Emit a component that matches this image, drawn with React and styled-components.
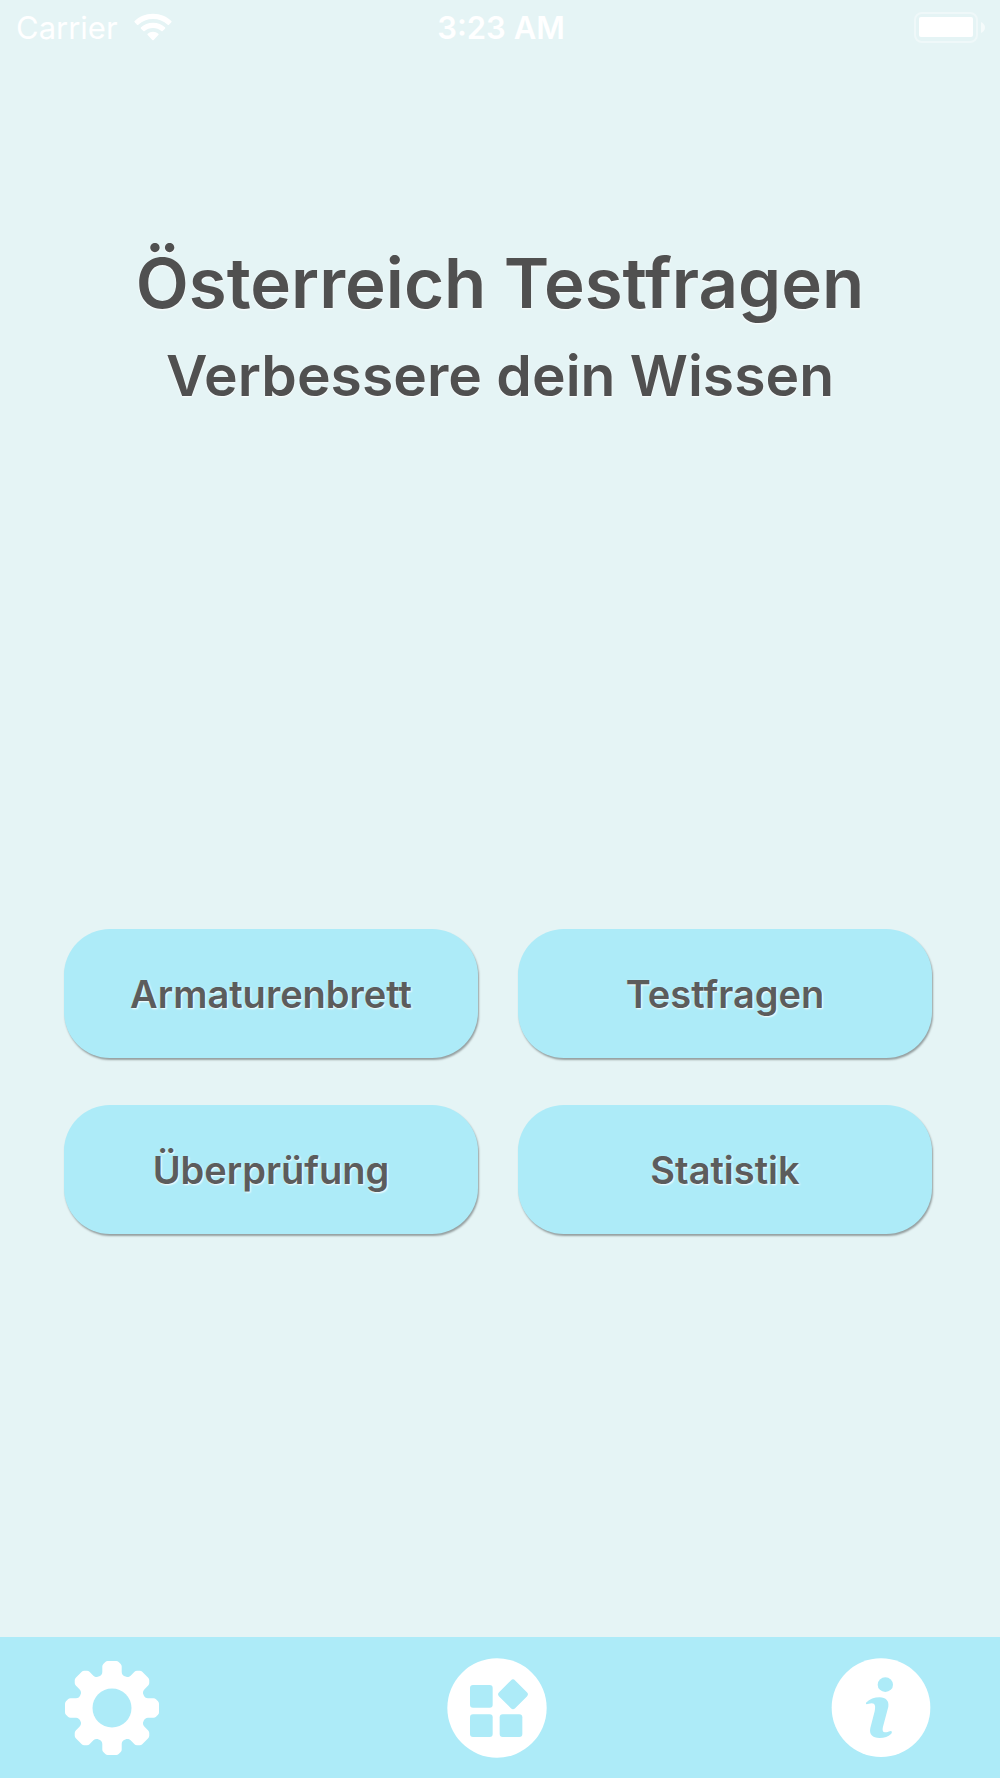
import React from "react";
import styled, { createGlobalStyle } from "styled-components";

const teeth = [0, 45, 90, 135, 180, 225, 270, 315];

const WifiIcon = () => (
  <svg width="38" height="28" viewBox="0 0 114 84" fill="#fff" aria-hidden="true">
    <path d="M57 2C80 2 99 11 112 24Q114 26 112 28L105 35Q103 37 101 35C89 24 74 18 57 18S25 24 13 35Q11 37 9 35L2 28Q0 26 2 24C15 11 34 2 57 2Z" />
    <path d="M57 29C72 29 84 34 93 43Q95 45 93 47L86 54Q84 56 82 54C75 48 67 45 57 45S39 48 32 54Q30 56 28 54L21 47Q19 45 21 43C30 34 42 29 57 29Z" />
    <path d="M57 56C63 56 69 58 73 62Q75 64 73 66L59 81Q57 83 55 81L41 66Q39 64 41 62C45 58 51 56 57 56Z" />
  </svg>
);

const BatteryIcon = () => (
  <svg width="72" height="32" viewBox="0 0 72 32" aria-hidden="true">
    <rect x="1" y="2" width="62" height="29" rx="7" fill="none" stroke="#fff" strokeOpacity="0.4" strokeWidth="2" />
    <rect x="5" y="6" width="54" height="20" rx="2" fill="#fff" />
    <path d="M67 11Q71 13 71 16.500T67 22Z" fill="#fff" fillOpacity="0.6" />
  </svg>
);

const GearIcon = () => (
  <svg width="100" height="100" viewBox="-50 -50 100 100" aria-hidden="true">
    <g fill="#fff">
      {teeth.map(angle => (
        <path
          key={angle}
          transform={`rotate(${angle})`}
          d="M0 0L-13.500 -31.200L-13 -31.500C-11 -32.300 -9.700 -34 -9.700 -36V-41.500Q-9.700 -43 -8.700 -44L-6.700 -46Q-5.700 -47 -4.200 -47H4.200Q5.700 -47 6.700 -46L8.700 -44Q9.700 -43 9.700 -41.500V-36C9.700 -34 11 -32.300 13 -31.500L13.500 -31.200Z"
        />
      ))}
      <circle r="33" />
    </g>
    <circle r="19.500" fill="#adebf8" />
  </svg>
);

const GridIcon = () => (
  <svg width="100" height="100" viewBox="52 54 300 300" aria-hidden="true">
    <circle cx="202" cy="204" r="149" fill="#fff" />
    <g fill="#adebf8">
      <rect x="121" y="135" width="68" height="68" rx="9" />
      <rect x="121" y="223" width="68" height="68" rx="9" />
      <rect x="210" y="223" width="68" height="68" rx="9" />
      <rect x="216" y="129" width="68" height="68" rx="9" transform="rotate(45 250 163)" />
    </g>
  </svg>
);

const InfoIcon = () => (
  <svg width="100" height="100" viewBox="34 54 300 300" aria-hidden="true">
    <circle cx="184" cy="203" r="148" fill="#fff" />
    <g fill="#adebf8">
      <ellipse cx="197" cy="134" rx="23" ry="22" />
      <path d="M139 188C150 177 164 172 180 172C199 172 209 184 206 200L190 260C187 272 190 278 200 277C206 276 209 273 214 273C218 274 217 279 214 282C206 290 194 294 180 294C158 294 148 283 152 264L165 214C168 199 167 190 156 190C149 190 145 193 141 193Q138 191 139 188Z" />
    </g>
  </svg>
);

export default function App() {
  return (
    <>
      <GlobalStyle />
      <Screen>
        <StatusBar>
          <Network>
            Carrier
            <WifiIcon />
          </Network>
          <Time>3:23 AM</Time>
          <Battery>
            <BatteryIcon />
          </Battery>
        </StatusBar>
        <Heading>
          <Title>Österreich Testfragen</Title>
          <Subtitle>Verbessere dein Wissen</Subtitle>
        </Heading>
        <Menu>
          <MenuButton>Armaturenbrett</MenuButton>
          <MenuButton>Testfragen</MenuButton>
          <MenuButton>Überprüfung</MenuButton>
          <MenuButton>Statistik</MenuButton>
        </Menu>
        <TabBar>
          <TabButton aria-label="Einstellungen">
            <GearIcon />
          </TabButton>
          <TabButton aria-label="Übersicht">
            <GridIcon />
          </TabButton>
          <TabButton aria-label="Info">
            <InfoIcon />
          </TabButton>
        </TabBar>
      </Screen>
    </>
  );
}

const GlobalStyle = createGlobalStyle`
  * {
    box-sizing: border-box;
  }
  body {
    margin: 0;
    background: #e5f4f5;
    font-family: "Inter", "Liberation Sans", sans-serif;
  }
`;
const Screen = styled.div`
  display: flex;
  flex-direction: column;
  min-height: 100vh;
`;
const StatusBar = styled.header`
  display: grid;
  grid-template-columns: 1fr auto 1fr;
  align-items: center;
  height: 54px;
  padding: 0 14px 0 16px;
  color: #fff;
  font-size: 31px;
`;
const Network = styled.div`
  display: flex;
  align-items: center;
  gap: 16px;
`;
const Time = styled.time`
  font-weight: 600;
`;
const Battery = styled.div`
  display: flex;
  justify-content: flex-end;
`;
const Heading = styled.div`
  padding-top: 180px;
  text-align: center;
  color: #505050;
  text-shadow: 0 1px 2px #fff;
`;
const Title = styled.h1`
  margin: 0;
  font-size: 69px;
  font-weight: 600;
  line-height: 98px;
`;
const Subtitle = styled.h2`
  margin: 0;
  font-size: 57px;
  font-weight: 600;
  line-height: 88px;
`;
const Menu = styled.main`
  display: grid;
  grid-template-columns: 1fr 1fr;
  gap: 47px 40px;
  margin: auto 68px 403px 64px;
`;
const MenuButton = styled.button`
  height: 129px;
  padding: 0 16px;
  border: none;
  border-radius: 46px;
  background: #adebf8;
  box-shadow: 1px 2px 2px rgba(0, 0, 0, 0.35);
  color: #5c5c5c;
  font-family: inherit;
  font-size: 38px;
  font-weight: 600;
  text-shadow: 1px 1px 2px #fff;
  cursor: pointer;
`;
const TabBar = styled.nav`
  display: flex;
  justify-content: space-between;
  align-items: center;
  height: 141px;
  padding: 0 69px 0 62px;
  background: #adebf8;
`;
const TabButton = styled.button`
  display: flex;
  padding: 0;
  border: none;
  background: none;
  cursor: pointer;
`;
